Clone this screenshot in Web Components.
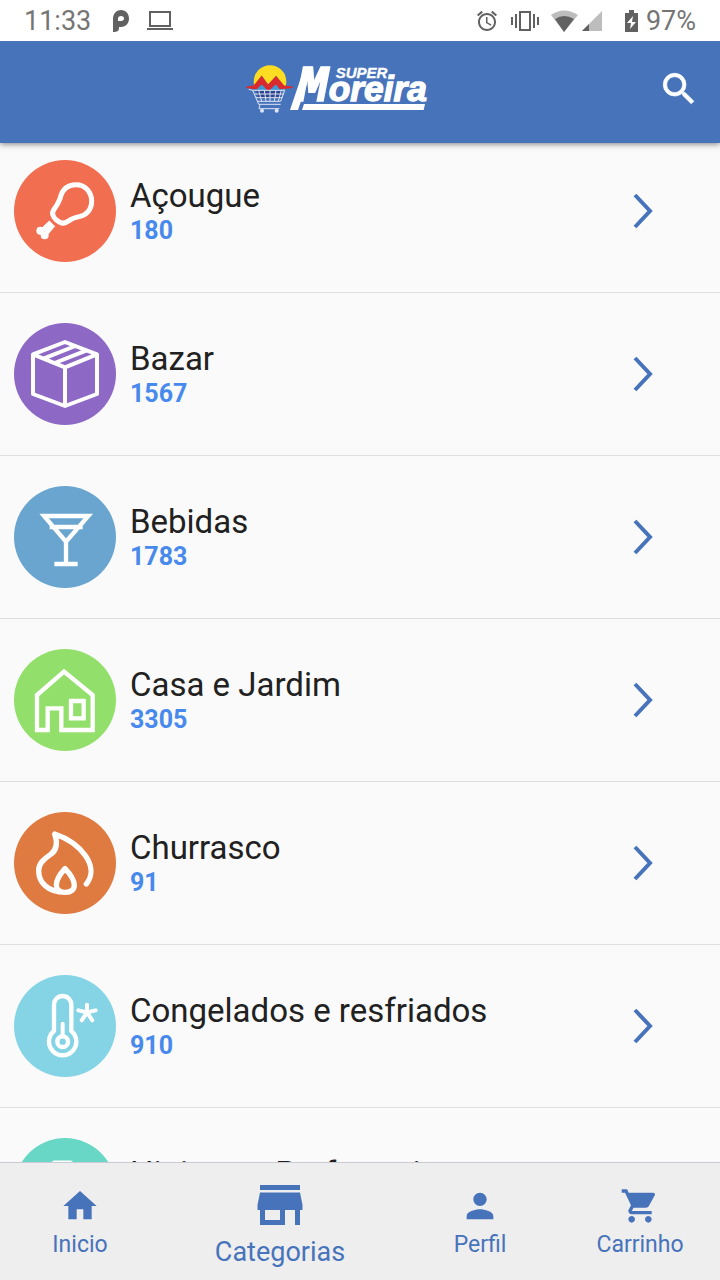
<!DOCTYPE html>
<html lang="pt-BR">
<head>
  <meta charset="UTF-8">
  <meta name="viewport" content="width=device-width, initial-scale=1">
  <title>Super Moreira - Categorias</title>
  <style>
    body {
      margin: 0;
      height: 100vh;
      display: flex;
      flex-direction: column;
      background: #fafafa;
      font-family: Roboto, "Noto Sans", sans-serif;
    }
    category-list {
      flex: 1;
      min-height: 0;
    }
  </style>
</head>
<body>
  <status-bar time="11:33" battery="97%"></status-bar>
  <app-header></app-header>
  <category-list>
    <category-row icon="meat" color="#f26e51" count="180">Açougue</category-row>
    <category-row icon="box" color="#8d68c4" count="1567">Bazar</category-row>
    <category-row icon="drink" color="#6aa5d0" count="1783">Bebidas</category-row>
    <category-row icon="house" color="#93df6b" count="3305">Casa e Jardim</category-row>
    <category-row icon="fire" color="#df7b40" count="91">Churrasco</category-row>
    <category-row icon="cold" color="#84d4e6" count="910">Congelados e resfriados</category-row>
    <category-row icon="hygiene" color="#68d7c6" count="">Higiene e Perfumaria</category-row>
  </category-list>
  <tab-bar>
    <tab-item icon="home">Inicio</tab-item>
    <tab-item icon="store" active>Categorias</tab-item>
    <tab-item icon="person">Perfil</tab-item>
    <tab-item icon="cart">Carrinho</tab-item>
  </tab-bar>

  <script>
    // category icons, white strokes on a 306 unit circle
    const categoryIcons = {
      meat: `
        <path d="M187 74C214 74 233 97 233 124C233 150 216 165 198 169C182 172 172 176 160 185C150 192 138 190 126 179C115 168 113 159 119 150C128 138 133 130 138 116C143 92 158 74 187 74Z" stroke-width="15"/>
        <path d="M106 183L122 199L102 222L84 204Z" fill="#fff" stroke-width="3"/>
        <circle cx="79" cy="212" r="12" fill="#fff" stroke="none"/>
        <circle cx="92" cy="226" r="12" fill="#fff" stroke="none"/>`,
      box: `
        <path d="M153 57L249 94V213L153 249L57 213V94ZM57 94L153 133L249 94M153 133V249M88 107L184 69M122 120L218 82" stroke-width="12"/>`,
      drink: `
        <path d="M90 90H223L156 167ZM107 123H206M156 168V234M121 234H191" stroke-linejoin="miter"/>`,
      house: `
        <path d="M69 243V138L150 68L236 138V243H142V178H101V243ZM171 156H209V208H171Z" stroke-linejoin="miter"/>`,
      fire: `
        <path d="M217 216C238 190 233 158 215 132C190 96 158 78 122 66C132 95 128 115 109 128C88 142 74 155 74 176C74 210 100 241 154 241C190 241 190 208 153 170C118 208 120 238 150 241" stroke-linecap="round" stroke-width="16"/>`,
      cold: `
        <path d="M120 168V89A26 26 0 0 1 172 89V168A41 41 0 1 1 120 168Z"/>
        <circle cx="146" cy="200" r="16"/>
        <path d="M146 146V184M219 112V89M219 112L245 106M219 112L193 106M219 112L235 136M219 112L203 136" stroke-linecap="round" stroke-width="12"/>`,
      hygiene: `
        <path d="M120 74H170V110H120ZM146 110V136M96 136H196V250H96Z"/>`
    };

    const tabIcons = {
      home: 'M10 20v-6h4v6h5v-8h3L12 3 2 12h3v8z',
      store: 'M20 4H4v2h16V4zm1 10v-2l-1-5H4l-1 5v2h1v6h10v-6h4v6h2v-6h1zm-9 4H6v-4h6v4z',
      person: 'M12 12c2.21 0 4-1.79 4-4s-1.79-4-4-4-4 1.79-4 4 1.79 4 4 4zm0 2c-2.67 0-8 1.34-8 4v2h16v-2c0-2.66-5.33-4-8-4z',
      cart: 'M7 18c-1.1 0-1.99.9-1.99 2S5.9 22 7 22s2-.9 2-2-.9-2-2-2zM1 2v2h2l3.6 7.59-1.35 2.45c-.16.28-.25.61-.25.96 0 1.1.9 2 2 2h12v-2H7.42c-.14 0-.25-.11-.25-.25l.03-.12.9-1.63h7.45c.75 0 1.41-.41 1.75-1.03l3.58-6.49c.08-.14.12-.31.12-.48 0-.55-.45-1-1-1H5.21l-.94-2H1zm16 16c-1.1 0-1.99.9-1.99 2s.89 2 1.99 2 2-.9 2-2-.9-2-2-2z'
    };

    class StatusBar extends HTMLElement {
      constructor() {
        super();
        this.attachShadow({ mode: 'open' });
      }

      connectedCallback() {
        this.shadowRoot.innerHTML = `
          <style>
            :host {
              display: flex;
              justify-content: space-between;
              align-items: center;
              height: 41px;
              padding: 0 24px;
              background: #fff;
              color: #757575;
              font-size: 27px;
              line-height: 32px;
              z-index: 2;
            }
            div {
              display: flex;
              align-items: center;
            }
            .left { gap: 18px; }
            .right { gap: 12px; }
            .network { gap: 4px; }
            .battery { gap: 8px; margin-left: 11px; }
            svg { display: block; fill: #616161; }
          </style>
          <div class="left">
            <span>${this.getAttribute('time')}</span>
            <svg width="20" height="22" viewBox="0 0 20 22"><path d="M4 22V9C4 4 7 0 12 0S20 4 20 8.500 17 17 12 17H10V18C10 21 8 22 4 22ZM12 6C10 6 9 7 9 9V11H12C16 11 16 6 12 6Z" fill-rule="evenodd"/></svg>
            <svg width="26" height="20" viewBox="0 0 26 20"><path d="M3 1H23V15H3ZM0 18H26" fill="none" stroke="#616161" stroke-width="2"/></svg>
          </div>
          <div class="right">
            <svg width="24" height="24" viewBox="0 0 24 24"><path d="M22 5.720l-4.600-3.860-1.290 1.530 4.600 3.860L22 5.720zM7.880 3.390L6.600 1.860 2 5.710l1.290 1.530 4.590-3.850zM12.500 8H11v6l4.750 2.850.750-1.230-4-2.370V8zM12 4c-4.970 0-9 4.030-9 9s4.020 9 9 9c4.970 0 9-4.030 9-9s-4.030-9-9-9zm0 16c-3.870 0-7-3.130-7-7s3.130-7 7-7 7 3.130 7 7-3.130 7-7 7z"/></svg>
            <svg width="28" height="22" viewBox="0 0 28 22"><path d="M0 7h2v8H0zM4 4h2v14H4zM22 4h2v14h-2zM26 7h2v8h-2z"/><rect x="9" y="2" width="10" height="18" fill="none" stroke="#616161" stroke-width="2"/></svg>
            <div class="network">
              <svg width="27" height="22" viewBox="0 0 27 22"><path d="M0 5Q13 -4 27 5L13 22Z" fill="#bdbdbd"/><path d="M4 9Q13 3 23 9L13 22Z"/></svg>
              <svg width="20" height="20" viewBox="0 0 20 20"><path d="M20 0V20H0Z" fill="#bdbdbd"/><path d="M7 13V20H0Z"/></svg>
            </div>
            <div class="battery">
              <svg width="13" height="22" viewBox="0 0 13 22"><path d="M4 0H9V3H13V22H0V3H4ZM8 6L2 13H6L5 19L11 12H7Z" fill-rule="evenodd"/></svg>
              <span>${this.getAttribute('battery')}</span>
            </div>
          </div>
        `;
      }
    }

    class AppHeader extends HTMLElement {
      constructor() {
        super();
        this.attachShadow({ mode: 'open' });
      }

      connectedCallback() {
        this.shadowRoot.innerHTML = `
          <style>
            :host {
              display: flex;
              align-items: center;
              height: 102px;
              padding: 0 17px 7px 21px;
              box-sizing: border-box;
              background: #4773bb;
              box-shadow: 0 1px 6px rgba(0, 0, 0, .5);
              z-index: 1;
            }
            .logo {
              flex: 1;
              display: flex;
              justify-content: center;
            }
            button {
              display: flex;
              align-items: center;
              justify-content: center;
              width: 48px;
              height: 48px;
              padding: 0;
              border: none;
              background: none;
              cursor: pointer;
            }
            svg { display: block; overflow: visible; }
            text {
              font-family: "Liberation Sans", Arial, sans-serif;
              font-weight: 700;
              font-style: italic;
              fill: #fff;
              stroke: #fff;
            }
            .initial { font-family: "Liberation Mono", monospace; }
          </style>
          <a class="logo" href="#" aria-label="Super Moreira">
            <svg width="185" height="67" viewBox="30 15 555 201">
              <circle cx="102" cy="95" r="49" fill="#fcdd22"/>
              <path d="M56 112L77 77L97 105L121 78L146 112L140 128H62Z" fill="#3c9bd8"/>
              <path d="M31 112L54 108L77 80L96 106L120 80L143 108L170 112L132 116L120 100L97 122L77 100L62 116Z" fill="#d92b2f" stroke="#d92b2f" stroke-width="4"/>
              <path d="M60 122H140L134 145H68Z" fill="#2f4590"/>
              <path d="M38 118L50 121L68 163H134M49 121H146L134 154H64M55 132H143M60 143H139M68 121L77 154M85 121L90 154M102 121V154M120 121L115 154M136 121L127 154M72 163L69 176H130" fill="none" stroke="#dde4f2" stroke-width="3"/>
              <circle cx="78" cy="182" r="6" fill="#dde4f2"/>
              <circle cx="122" cy="182" r="6" fill="#dde4f2"/>
              <path d="M206 50H230L186 180H162Z" fill="#fff"/>
              <path d="M204 162H567L563 180H198Z" fill="#fff"/>
              <text x="299" y="84" font-size="45" stroke-width="1">SUPER</text>
              <text class="initial" x="184" y="154" font-size="154" stroke-width="5">M</text>
              <text x="278" y="154" font-size="106" stroke-width="4">oreira</text>
            </svg>
          </a>
          <button type="button" aria-label="Buscar">
            <svg width="42" height="42" viewBox="0 0 24 24" fill="#fff" stroke="#fff" stroke-width=".4"><path d="M15.500 14h-.790l-.280-.270A6.471 6.471 0 0 0 16 9.500 6.500 6.500 0 1 0 9.500 16c1.610 0 3.090-.590 4.230-1.570l.270.280v.790l5 4.990L20.490 19l-4.990-5zm-6 0C7.010 14 5 11.990 5 9.500S7.010 5 9.500 5 14 7.010 14 9.500 11.990 14 9.500 14z"/></svg>
          </button>
        `;
      }
    }

    class CategoryList extends HTMLElement {
      constructor() {
        super();
        this.attachShadow({ mode: 'open' });
      }

      connectedCallback() {
        this.setAttribute('role', 'list');
        this.shadowRoot.innerHTML = `
          <style>
            :host {
              display: flex;
              flex-direction: column;
              gap: 30px;
              padding-top: 17px;
              overflow-y: auto;
              scrollbar-width: none;
            }
            ::slotted(*) { flex: none; }
          </style>
          <slot></slot>
        `;
      }
    }

    class CategoryRow extends HTMLElement {
      constructor() {
        super();
        this.attachShadow({ mode: 'open' });
      }

      connectedCallback() {
        this.setAttribute('role', 'listitem');
        this.shadowRoot.innerHTML = `
          <style>
            :host {
              display: block;
              border-bottom: 1px solid #dedede;
            }
            a {
              display: flex;
              align-items: center;
              gap: 14px;
              padding: 0 67px 30px 14px;
              color: #212121;
              text-decoration: none;
            }
            .icon {
              flex: none;
              width: 102px;
              height: 102px;
              border-radius: 50%;
              background: ${this.getAttribute('color')};
            }
            .text {
              flex: 1;
              display: flex;
              flex-direction: column;
              gap: 2px;
              padding-top: 2px;
            }
            .name {
              font-size: 33px;
              line-height: 36px;
            }
            .count {
              min-height: 30px;
              color: #4789ec;
              font-size: 25px;
              font-weight: 700;
              line-height: 30px;
            }
            svg { display: block; }
          </style>
          <a href="#${this.getAttribute('icon')}">
            <span class="icon">
              <svg width="102" height="102" viewBox="0 0 306 306" fill="none" stroke="#fff" stroke-width="13" stroke-linejoin="round">${categoryIcons[this.getAttribute('icon')]}</svg>
            </span>
            <span class="text">
              <span class="name"><slot></slot></span>
              <span class="count">${this.getAttribute('count')}</span>
            </span>
            <svg width="20" height="36" viewBox="0 0 20 36"><path d="M2 2L17 18L2 34" fill="none" stroke="#4773bb" stroke-width="4"/></svg>
          </a>
        `;
      }
    }

    class TabBar extends HTMLElement {
      constructor() {
        super();
        this.attachShadow({ mode: 'open' });
      }

      connectedCallback() {
        this.shadowRoot.innerHTML = `
          <style>
            :host { display: block; }
            nav {
              display: flex;
              height: 117px;
              border-top: 1px solid #c9cad6;
              background: #eee;
            }
          </style>
          <nav><slot></slot></nav>
        `;
      }
    }

    class TabItem extends HTMLElement {
      constructor() {
        super();
        this.attachShadow({ mode: 'open' });
      }

      connectedCallback() {
        const active = this.hasAttribute('active');
        const size = active ? 60 : 40;
        this.shadowRoot.innerHTML = `
          <style>
            :host {
              display: flex;
              flex: 2 1 0;
              font-size: 23px;
            }
            :host([active]) {
              flex-grow: 3;
              font-size: 27px;
            }
            a {
              flex: 1;
              display: flex;
              flex-direction: column;
              align-items: center;
              justify-content: center;
              gap: 5px;
              padding-top: 2px;
              color: #4773bb;
              line-height: 28px;
              text-decoration: none;
            }
            :host([active]) a {
              gap: 3px;
              padding: 0 0 3px;
            }
            svg { display: block; fill: currentColor; }
          </style>
          <a href="#${this.getAttribute('icon')}" ${active ? 'aria-current="page"' : ''}>
            <svg width="${size}" height="${size}" viewBox="0 0 24 24"><path d="${tabIcons[this.getAttribute('icon')]}"/></svg>
            <slot></slot>
          </a>
        `;
      }
    }

    customElements.define('status-bar', StatusBar);
    customElements.define('app-header', AppHeader);
    customElements.define('category-list', CategoryList);
    customElements.define('category-row', CategoryRow);
    customElements.define('tab-bar', TabBar);
    customElements.define('tab-item', TabItem);
  </script>
</body>
</html>
